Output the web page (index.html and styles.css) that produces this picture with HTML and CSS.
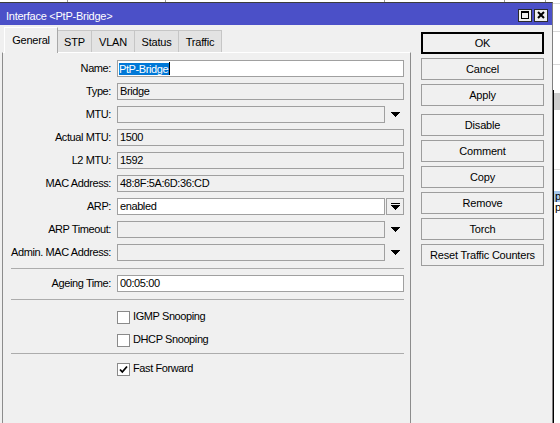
FILE: index.html
```html
<!DOCTYPE html>
<html lang="en">
<head>
<meta charset="utf-8">
<title>Interface &lt;PtP-Bridge&gt;</title>
<link rel="stylesheet" href="styles.css">
</head>
<body>
<div class="window">
  <div class="titlebar">
    <span class="title">Interface &lt;PtP-Bridge&gt;</span>
    <div class="winctl">
      <svg class="ctl" width="14" height="13" viewBox="0 0 14 13">
        <rect x="0.5" y="0.5" width="13" height="12" fill="#f0f0f0" stroke="#2b2b2b"/>
        <rect x="3.5" y="2.5" width="7" height="7" fill="none" stroke="#000"/>
        <rect x="3" y="2" width="8" height="2" fill="#000"/>
      </svg>
      <svg class="ctl" width="14" height="13" viewBox="0 0 14 13">
        <rect x="0.5" y="0.5" width="13" height="12" fill="#f0f0f0" stroke="#2b2b2b"/>
        <path d="M4 3 L10 9 M10 3 L4 9" stroke="#000" stroke-width="2" fill="none"/>
      </svg>
    </div>
  </div>
  <div class="client">
    <div class="tabs-area">
      <div class="tabstrip">
        <div class="tab active w-general">General</div>
        <div class="tab w-stp">STP</div>
        <div class="tab w-vlan">VLAN</div>
        <div class="tab w-status">Status</div>
        <div class="tab w-traffic">Traffic</div>
      </div>
      <div class="panel">
        <div class="form">
          <div class="label">Name:</div>
          <div class="field white name"><span class="sel">PtP-Bridge</span><span class="caret"></span></div>

          <div class="label">Type:</div>
          <div class="field">Bridge</div>

          <div class="label">MTU:</div>
          <div class="combo">
            <div class="field"></div>
            <div class="drop"><svg width="9" height="5" viewBox="0 0 9 5"><path d="M0 0h9v1H0zM1 1h7v1H1zM2 2h5v1H2zM3 3h3v1H3zM4 4h1v1H4z" fill="#000"/></svg></div>
          </div>

          <div class="label">Actual MTU:</div>
          <div class="field">1500</div>

          <div class="label">L2 MTU:</div>
          <div class="field">1592</div>

          <div class="label">MAC Address:</div>
          <div class="field">48:8F:5A:6D:36:CD</div>

          <div class="label">ARP:</div>
          <div class="combo">
            <div class="field white">enabled</div>
            <div class="drop btn-drop"><svg width="9" height="7" viewBox="0 0 9 7"><path d="M0 0h9v1H0zM0 2h9v1H0zM1 3h7v1H1zM2 4h5v1H2zM3 5h3v1H3zM4 6h1v1H4z" fill="#000"/></svg></div>
          </div>

          <div class="label">ARP Timeout:</div>
          <div class="combo">
            <div class="field"></div>
            <div class="drop"><svg width="9" height="5" viewBox="0 0 9 5"><path d="M0 0h9v1H0zM1 1h7v1H1zM2 2h5v1H2zM3 3h3v1H3zM4 4h1v1H4z" fill="#000"/></svg></div>
          </div>

          <div class="label">Admin. MAC Address:</div>
          <div class="combo">
            <div class="field"></div>
            <div class="drop"><svg width="9" height="5" viewBox="0 0 9 5"><path d="M0 0h9v1H0zM1 1h7v1H1zM2 2h5v1H2zM3 3h3v1H3zM4 4h1v1H4z" fill="#000"/></svg></div>
          </div>

          <div class="sep"></div>

          <div class="label">Ageing Time:</div>
          <div class="field white">00:05:00</div>

          <div class="sep"></div>

          <div class="check first"><span class="box"></span>IGMP Snooping</div>
          <div class="check"><span class="box"></span>DHCP Snooping</div>

          <div class="sep tight"></div>

          <div class="check"><span class="box"><svg width="11" height="11" viewBox="0 0 11 11"><path d="M2 5.5 L4.3 8 L9 2.5" stroke="#000" stroke-width="1.8" fill="none"/></svg></span>Fast Forward</div>
        </div>
      </div>
    </div>
    <div class="buttons">
      <div class="btn default">OK</div>
      <div class="btn">Cancel</div>
      <div class="btn">Apply</div>
      <div class="btn group">Disable</div>
      <div class="btn">Comment</div>
      <div class="btn">Copy</div>
      <div class="btn">Remove</div>
      <div class="btn">Torch</div>
      <div class="btn">Reset Traffic Counters</div>
    </div>
  </div>
</div>
<div class="backdrop">
  <div class="bd-top">
    <div class="bd-cell h3"></div>
    <div class="bd-cell h27"></div>
    <div class="bd-cell h32"></div>
  </div>
  <div class="bd-list">
    <div class="bd-head"></div>
    <div class="bd-cell h60"></div>
    <div class="bd-space"></div>
    <div class="bd-row selected">p</div>
    <div class="bd-row">p</div>
  </div>
</div>
</body>
</html>
```
FILE: styles.css
```css
* {
  box-sizing: border-box;
}

html,
body {
  margin: 0;
  padding: 0;
}

body {
  width: 560px;
  height: 423px;
  overflow: hidden;
  display: flex;
  align-items: flex-start;
  background-color: #fff;
  /* column ticks of the list behind the dialog */
  background-image:
    linear-gradient(#9a9a9a, #9a9a9a),
    linear-gradient(#9a9a9a, #9a9a9a),
    linear-gradient(#9a9a9a, #9a9a9a),
    linear-gradient(#9a9a9a, #9a9a9a),
    linear-gradient(#9a9a9a, #9a9a9a);
  background-size: 1px 2px;
  background-repeat: no-repeat;
  background-position: 67px 0, 165px 0, 384px 0, 504px 0, 545px 0;
  font-family: "Liberation Sans", Arial, sans-serif;
  font-size: 11px;
  letter-spacing: -0.4px;
  color: #000;
}

/* ---------- dialog window ---------- */

.window {
  flex: none;
  width: 553px;
  height: 421px;
  margin-top: 2px;
  border-top: 1px solid #3c3c3c;
  border-right: 1px solid #808080;
  display: flex;
  flex-direction: column;
  background: #f0f0f0;
}

.titlebar {
  flex: none;
  height: 22px;
  background: #4b50c8;
  color: #fff;
  display: flex;
  align-items: flex-start;
  padding: 6px 4px 0 6px;
}

.title {
  flex: 1;
  line-height: 14px;
  letter-spacing: -0.25px;
  white-space: nowrap;
}

.winctl {
  display: flex;
  gap: 2px;
}

.ctl {
  display: block;
}

.client {
  flex: 1;
  min-height: 0;
  display: flex;
  padding-left: 2px;
}

/* ---------- tabs ---------- */

.tabs-area {
  flex: none;
  width: 409px;
  display: flex;
  flex-direction: column;
}

.tabstrip {
  flex: none;
  height: 25px;
  margin-top: 2px;
  padding-left: 2px;
  display: flex;
  align-items: flex-end;
}

.tab {
  height: 22px;
  margin-left: -1px;
  border: 1px solid #c6c6c6;
  border-bottom: none;
  background: #e3e3e3;
  text-align: center;
  line-height: 22px;
  letter-spacing: -0.2px;
  white-space: nowrap;
}

.tab.active {
  position: relative;
  z-index: 1;
  margin-left: 0;
  margin-bottom: -1px;
  height: 26px;
  line-height: 24px;
  background: #f0f0f0;
  border-color: #fff #a8a8a8 transparent #fff;
}

.w-general { width: 54px; }
.w-stp { width: 35px; }
.w-vlan { width: 44px; }
.w-status { width: 45px; }
.w-traffic { width: 44px; }

.panel {
  flex: 1;
  border-top: 1px solid #fff;
  border-left: 1px solid #8c8c8c;
  border-right: 1px solid #8c8c8c;
  padding: 7px 6px 0 0;
}

/* ---------- form ---------- */

.form {
  display: grid;
  grid-template-columns: 108px 1fr;
  column-gap: 6px;
  row-gap: 6px;
}

.label {
  height: 17px;
  line-height: 17px;
  text-align: right;
  white-space: nowrap;
}

.field {
  height: 17px;
  border: 1px solid #a0a0a0;
  background: #f0f0f0;
  line-height: 15px;
  padding-left: 2px;
  white-space: nowrap;
  overflow: hidden;
}

.field.white {
  background: #fff;
}

.field.name {
  display: flex;
  align-items: center;
  padding-left: 1px;
}

.sel {
  display: block;
  background: #0078d7;
  color: #fff;
  line-height: 12px;
  padding-right: 1px;
}

.caret {
  display: block;
  width: 1px;
  height: 13px;
  background: #000;
}

.combo {
  display: flex;
  height: 17px;
}

.combo .field {
  flex: 1;
}

.drop {
  flex: none;
  width: 19px;
  display: flex;
  align-items: center;
  justify-content: center;
  padding-left: 1px;
}

.drop svg {
  display: block;
}

.drop.btn-drop {
  width: 18px;
  margin-left: 1px;
  padding-left: 0;
  border: 1px solid #a0a0a0;
  background: #f0f0f0;
}

.sep {
  grid-column: 1 / -1;
  height: 1px;
  margin-top: 1px;
  margin-left: 8px;
  background: #acacac;
}

.sep.tight {
  margin-top: -1px;
}

.check {
  grid-column: 2;
  height: 17px;
  line-height: 17px;
  display: flex;
  align-items: flex-start;
  white-space: nowrap;
}

.check.first {
  margin-top: 2px;
}

.box {
  flex: none;
  width: 13px;
  height: 13px;
  margin-top: 3px;
  margin-right: 3px;
  border: 1px solid #8a8a8a;
  background: #fff;
}

.box svg {
  display: block;
}

/* ---------- command buttons ---------- */

.buttons {
  flex: none;
  width: 123px;
  margin-left: 10px;
  padding-top: 7px;
  display: flex;
  flex-direction: column;
  gap: 4px;
}

.btn {
  height: 22px;
  border: 1px solid #9d9d9d;
  background: #f0f0f0;
  text-align: center;
  line-height: 20px;
  letter-spacing: -0.2px;
  white-space: nowrap;
}

.btn.default {
  border: 2px solid #000;
  line-height: 18px;
}

.btn.group {
  margin-top: 4px;
}

/* ---------- list behind the dialog ---------- */

.backdrop {
  flex: 1;
  height: 423px;
  display: flex;
  flex-direction: column;
  overflow: hidden;
}

.bd-top {
  flex: none;
  height: 90px;
}

.bd-cell {
  border-bottom: 1px solid #d9d9d9;
}

.h3 { height: 4px; }
.h27 { height: 28px; }
.h32 { height: 33px; }
.h60 { height: 60px; }

.bd-list {
  flex: 1;
  border-left: 1px solid #000;
  padding-top: 3px;
}

.bd-head {
  height: 17px;
  background: #cdcdcd;
}

.bd-space {
  height: 21px;
}

.bd-row {
  height: 11px;
  line-height: 10px;
  padding-left: 1px;
  white-space: nowrap;
}

.bd-row.selected {
  background: #a9cbef;
}
```
